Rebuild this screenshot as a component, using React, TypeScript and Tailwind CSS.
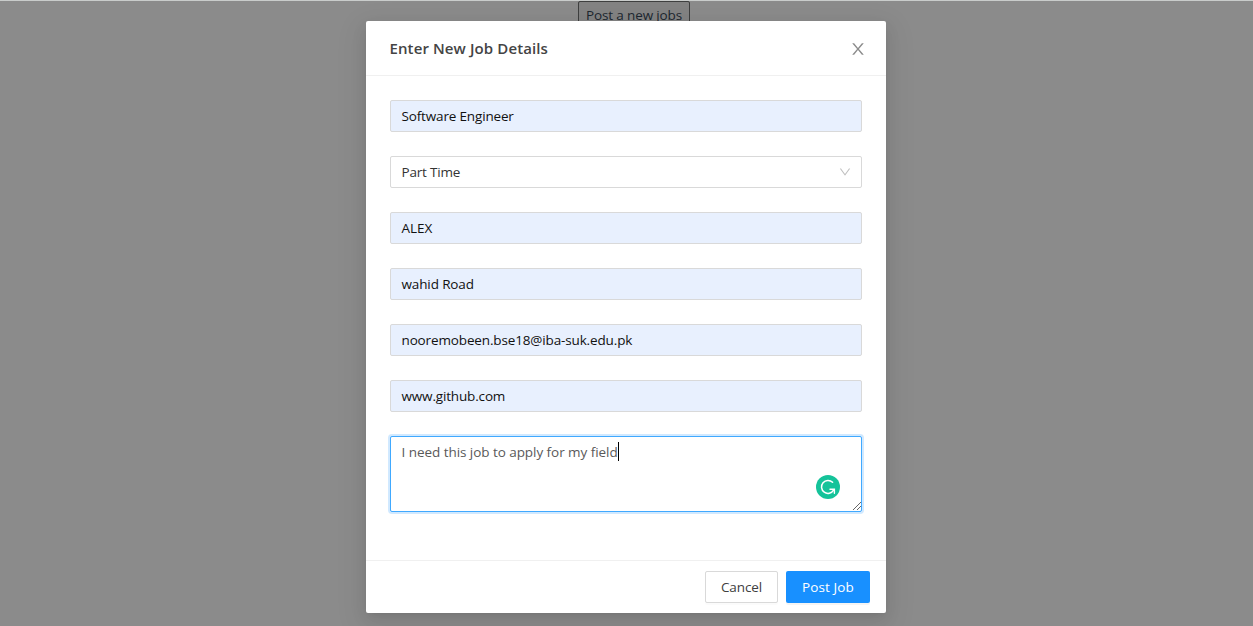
import React from "react";

type FieldData = { value: string; text: string };

const before: FieldData[] = [{ value: "Software Engineer", text: "tracking-[-0.16px]" }];

const after: FieldData[] = [
  { value: "ALEX", text: "tracking-[0px]" },
  { value: "wahid Road", text: "tracking-[-0.13px]" },
  { value: "nooremobeen.bse18@iba-suk.edu.pk", text: "tracking-[-0.14px]" },
  { value: "www.github.com", text: "tracking-[-0.16px]" },
];

function FilledField({ value, text }: FieldData) {
  return (
    <div className="flex h-8 items-center rounded-xs border border-[#d9d9d9] bg-[#e8f0fe] px-[10.5px] text-[#111]">
      <span className={text}>{value}</span>
    </div>
  );
}

function CloseIcon() {
  return (
    <svg viewBox="64 64 896 896" className="mt-0.5 size-4 fill-[#8c8c8c]">
      <path d="M563.8 512l262.5-312.9c4.4-5.2.7-13.1-6.1-13.1h-79.8c-4.7 0-9.2 2.1-12.3 5.7L511.6 449.8 295.1 191.7c-3-3.6-7.5-5.7-12.3-5.7H203c-6.8 0-10.5 7.9-6.1 13.1L459.4 512 196.9 824.9A7.95 7.95 0 0 0 203 838h79.8c4.7 0 9.2-2.1 12.3-5.7l216.5-258.1 216.5 258.1c3 3.6 7.5 5.7 12.3 5.7h79.8c6.8 0 10.5-7.9 6.1-13.1L563.8 512z" />
    </svg>
  );
}

function DownIcon() {
  return (
    <svg viewBox="64 64 896 896" className="size-3 fill-[#bfbfbf]">
      <path d="M884 256h-75c-5.1 0-9.9 2.5-12.9 6.6L512 654.2 227.9 262.6c-3-4.1-7.8-6.6-12.9-6.6h-75c-6.5 0-10.3 7.4-6.5 12.7l352.6 486.1c12.8 17.6 39 17.6 51.7 0l352.6-486.1c3.9-5.3.1-12.7-6.4-12.7z" />
    </svg>
  );
}

function GrammarBadge() {
  return (
    <svg viewBox="0 0 24 24" className="absolute right-[21px] bottom-3 size-6">
      <circle cx="12" cy="12" r="12" fill="#15c39a" />
      <path d="M16.6 7.3A6.5 6.5 0 1 0 17.6 15.2" fill="none" stroke="#fff" strokeWidth="1.5" strokeLinecap="round" />
      <path d="M14 14.2h4.4v4" fill="none" stroke="#fff" strokeWidth="1.4" strokeLinecap="round" />
    </svg>
  );
}

function ResizeGrip() {
  return (
    <svg viewBox="0 0 10 10" className="absolute right-0 bottom-0 size-2.5" shapeRendering="crispEdges">
      <path d="M1.5 9.5L9.5 1.5M5.5 9.5L9.5 5.5" stroke="#666" strokeWidth="1" />
    </svg>
  );
}

export default function App() {
  return (
    <div className="relative h-[626px] w-full overflow-hidden border-t border-[#c9cccb] bg-[#8b8b8b] font-['Open_Sans','Noto_Sans',sans-serif] text-[13.5px] leading-[22px] text-[#333]">
      <div className="flex justify-center pl-[15px]">
        <button className="h-7 w-28 rounded-[2px] border border-[#3e3f3f] bg-[#838383] tracking-[-0.13px] text-[#1d2730]">
          Post a new jobs
        </button>
      </div>
      <div className="absolute top-5 left-[366px] flex w-[520px] flex-col rounded-xs bg-white shadow-[0_3px_6px_-4px_rgba(0,0,0,0.12),0_6px_16px_0_rgba(0,0,0,0.08),0_9px_28px_8px_rgba(0,0,0,0.05)]">
        <div className="flex h-[55px] items-center justify-between border-b border-[#f0f0f0] pr-5 pl-[23.5px]">
          <h1 className="text-[15px] font-semibold tracking-[0.11px] text-[#444]">Enter New Job Details</h1>
          <CloseIcon />
        </div>
        <div className="flex flex-col gap-6 p-6 pb-12">
          {before.map((f) => (
            <FilledField key={f.value} {...f} />
          ))}
          <div className="flex h-8 items-center justify-between rounded-xs border border-[#d9d9d9] bg-white pr-2.5 pl-[10.5px]">
            <span className="tracking-[-0.2px]">Part Time</span>
            <DownIcon />
          </div>
          {after.map((f) => (
            <FilledField key={f.value} {...f} />
          ))}
          <div className="relative flex h-[76px] items-start rounded-xs border border-[#40a9ff] bg-white px-[10.5px] py-1 shadow-[0_0_0_2px_rgba(24,144,255,0.2)]">
            <span className="tracking-[-0.05px] text-[#595959]">I need this job to apply for my field</span>
            <span className="mt-px h-[19px] w-px bg-black" />
            <GrammarBadge />
            <ResizeGrip />
          </div>
        </div>
        <div className="flex h-[53px] items-center justify-end gap-2 border-t border-[#f0f0f0] px-4">
          <button className="h-8 w-[73px] rounded-xs border border-[#d9d9d9] bg-white tracking-[-0.1px] text-[#404040] shadow-[0_2px_0_rgba(0,0,0,0.015)]">
            Cancel
          </button>
          <button className="h-8 w-[84px] rounded-xs bg-[#1890ff] tracking-[0.1px] text-white shadow-[0_2px_0_rgba(0,0,0,0.045)]">
            Post Job
          </button>
        </div>
      </div>
    </div>
  );
}
